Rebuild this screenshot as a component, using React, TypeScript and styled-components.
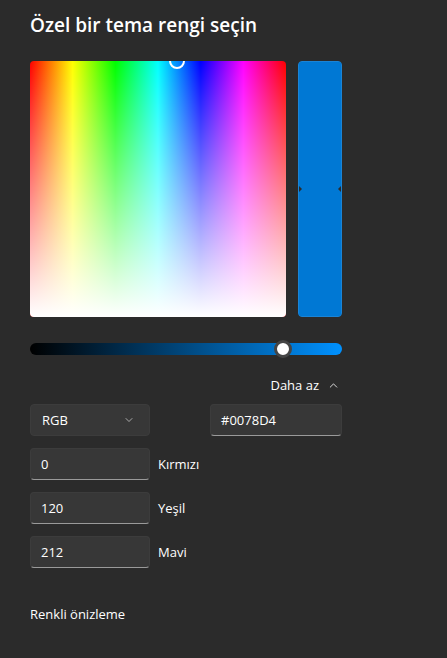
import styled, { createGlobalStyle } from "styled-components";
import { ChevronDown, ChevronUp } from "lucide-react";

const Global = createGlobalStyle`
  html, body {
    margin: 0;
    padding: 0;
    background: #2b2b2b;
  }
  body {
    font-family: "Open Sans", "Noto Sans", sans-serif;
    color: #ffffff;
  }
`;

const App = () => {
  return (
    <>
      <Global />
      <Page>
        <Title>Özel bir tema rengi seçin</Title>

        <PickerRow>
          <Spectrum>
            <WhiteFade />
            <Cursor style={{ left: "57.5%", top: 0 }} />
          </Spectrum>
          <Preview>
            <PreviewHalf />
            <PreviewHalf />
            <Notch side="left" />
            <Notch side="right" />
          </Preview>
        </PickerRow>

        <ValueSlider>
          <Thumb style={{ left: "81%" }} />
        </ValueSlider>

        <LessRow>
          <LessButton>
            Daha az
            <ChevronUp size={13} strokeWidth={1.5} />
          </LessButton>
        </LessRow>

        <FieldRow>
          <Select>
            RGB
            <ChevronDown size={12} strokeWidth={1.5} color="#cfcfcf" />
          </Select>
          <HexField>#0078D4</HexField>
        </FieldRow>

        <ChannelRow>
          <Field>0</Field>
          <Label>Kırmızı</Label>
        </ChannelRow>
        <ChannelRow>
          <Field>120</Field>
          <Label>Yeşil</Label>
        </ChannelRow>
        <ChannelRow>
          <Field>212</Field>
          <Label>Mavi</Label>
        </ChannelRow>

        <Footer>Renkli önizleme</Footer>
      </Page>
    </>
  );
};

export default App;

const Page = styled.div`
  width: 447px;
  height: 658px;
  box-sizing: border-box;
  padding: 12px 30px 0 30px;
  display: flex;
  flex-direction: column;
`;

const Title = styled.h1`
  margin: 0;
  font-size: 19px;
  font-weight: 600;
  line-height: 26px;
  color: #ffffff;
`;

const PickerRow = styled.div`
  display: flex;
  gap: 12px;
  margin-top: 23px;
  width: 312px;
`;

const Spectrum = styled.div`
  position: relative;
  width: 256px;
  height: 256px;
  border-radius: 4px;
  overflow: hidden;
  background: linear-gradient(
    to right,
    #ff0000 0%,
    #ffff00 16.67%,
    #00ff00 33.33%,
    #00ffff 50%,
    #0000ff 66.67%,
    #ff00ff 83.33%,
    #ff0000 100%
  );
`;

const WhiteFade = styled.div`
  position: absolute;
  inset: 0;
  background: linear-gradient(to bottom, rgba(255, 255, 255, 0) 0%, #ffffff 100%);
`;

const Cursor = styled.div`
  position: absolute;
  width: 12px;
  height: 12px;
  margin: -8px 0 0 -8px;
  border: 2px solid #ffffff;
  border-radius: 50%;
`;

const Preview = styled.div`
  position: relative;
  width: 44px;
  height: 256px;
  box-sizing: border-box;
  border: 1px solid #1a84d6;
  border-radius: 4px;
  overflow: hidden;
  display: flex;
  flex-direction: column;
  background: #0078d4;
`;

const PreviewHalf = styled.div`
  flex: 1;
  background: #0078d4;
`;

const Notch = styled.div<{ side: "left" | "right" }>`
  position: absolute;
  top: 123px;
  ${({ side }) => side}: -1px;
  width: 0;
  height: 0;
  border-top: 4px solid transparent;
  border-bottom: 4px solid transparent;
  ${({ side }) =>
    side === "left"
      ? "border-left: 4px solid #2b2b2b;"
      : "border-right: 4px solid #2b2b2b;"}
`;

const ValueSlider = styled.div`
  position: relative;
  margin-top: 26px;
  width: 312px;
  height: 12px;
  border-radius: 6px;
  background: linear-gradient(to right, #000000 0%, #0091ff 100%);
`;

const Thumb = styled.div`
  position: absolute;
  top: 50%;
  width: 12px;
  height: 12px;
  transform: translate(-50%, -50%);
  border-radius: 50%;
  background: #ffffff;
  border: 3px solid #454545;
`;

const LessRow = styled.div`
  width: 312px;
  display: flex;
  justify-content: flex-end;
  margin-top: 21px;
`;

const LessButton = styled.div`
  display: flex;
  align-items: center;
  gap: 8px;
  font-size: 13px;
  line-height: 18px;
  color: #ffffff;
  padding-right: 2px;
`;

const FieldRow = styled.div`
  width: 312px;
  display: flex;
  justify-content: space-between;
  margin-top: 10px;
`;

const Box = styled.div`
  height: 32px;
  box-sizing: border-box;
  border-radius: 4px;
  background: #373737;
  border: 1px solid #3c3c3c;
  display: flex;
  align-items: center;
  font-size: 13px;
  color: #ffffff;
`;

const Select = styled(Box)`
  width: 120px;
  padding: 0 14px 0 11px;
  justify-content: space-between;
`;

const Field = styled(Box)`
  width: 120px;
  padding: 0 10px;
  border-bottom: 1px solid #9a9a9a;
`;

const HexField = styled(Field)`
  width: 132px;
`;

const ChannelRow = styled.div`
  display: flex;
  align-items: center;
  gap: 8px;
  margin-top: 12px;
`;

const Label = styled.span`
  font-size: 13px;
  color: #ffffff;
`;

const Footer = styled.div`
  margin-top: 37px;
  font-size: 13px;
  color: #ffffff;
`;
